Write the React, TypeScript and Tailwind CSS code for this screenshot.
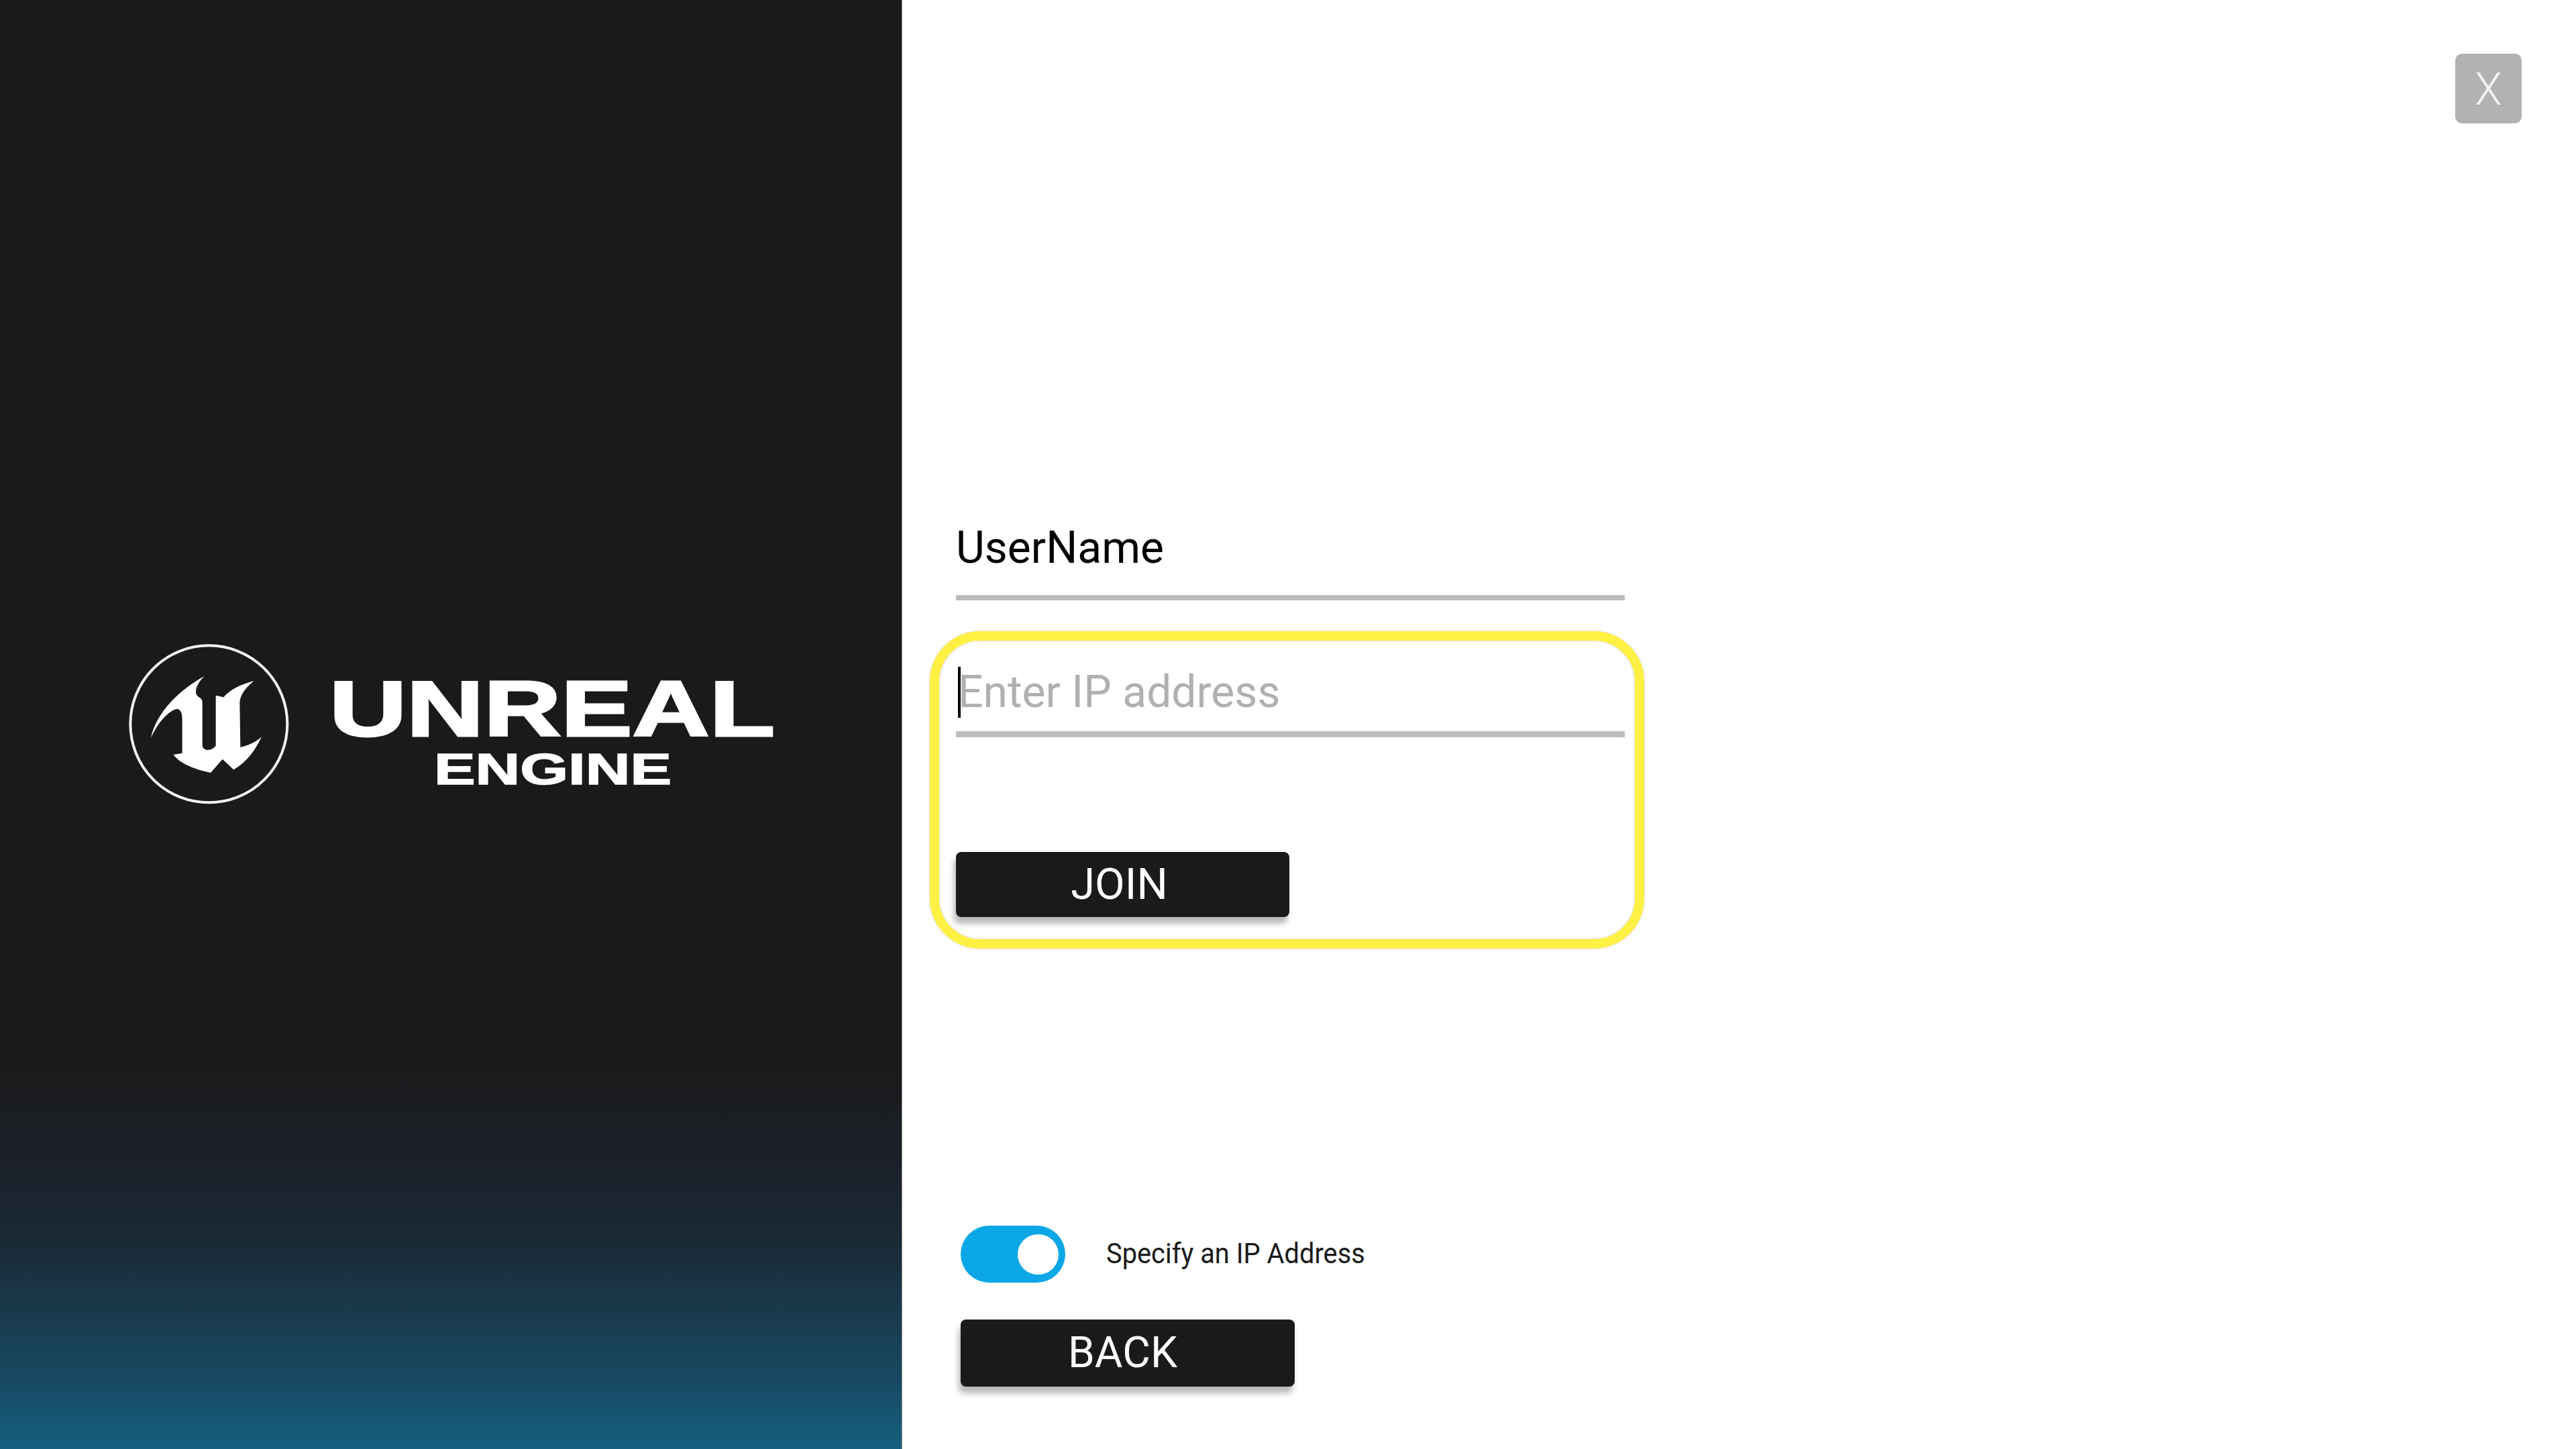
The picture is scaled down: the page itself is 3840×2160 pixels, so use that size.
import React from "react";

const roboto = "font-['Roboto',sans-serif]";

function UnrealMark() {
  return (
    <svg width="280" height="280" viewBox="0 0 840 840" className="shrink-0">
      <circle cx="424" cy="418" r="351" fill="none" stroke="#f2f2f2" strokeWidth="12" />
      <path
        fill="#ffffff"
        d="M165 480 C180 400 250 290 405 203 C375 230 360 265 368 285 C375 300 395 300 395 320 L395 515 C400 540 435 540 455 515 L455 290 L490 298 C520 262 570 240 625 225 C590 255 565 285 562 320 L565 522 C600 515 640 495 660 475 C630 540 590 590 535 622 L485 575 L432 636 C370 622 300 600 265 555 L305 548 L305 400 C305 370 300 352 280 350 C240 360 190 420 165 480 Z"
      />
    </svg>
  );
}

function UnrealWordmark() {
  return (
    <svg width="700" height="260" viewBox="0 0 700 260" className="shrink-0 ml-[30px]">
      <text
        x="11"
        y="147"
        fontFamily="Liberation Sans"
        fontWeight="700"
        fontSize="117"
        fill="#ffffff"
        stroke="#ffffff"
        strokeWidth="3"
        textLength="664"
        lengthAdjust="spacingAndGlyphs"
      >
        UNREAL
      </text>
      <text
        x="167"
        y="219"
        fontFamily="Liberation Sans"
        fontWeight="700"
        fontSize="65"
        fill="#ffffff"
        stroke="#ffffff"
        strokeWidth="1.5"
        textLength="354"
        lengthAdjust="spacingAndGlyphs"
      >
        ENGINE
      </text>
    </svg>
  );
}

function DarkButton({ label, className }: { label: string; className: string }) {
  return (
    <button
      className={`flex items-center justify-center bg-[#1a1a1a] text-white rounded-[8px] shadow-[-3px_10px_8px_rgba(0,0,0,0.28)] leading-none ${className}`}
    >
      {label}
    </button>
  );
}

export default function App() {
  return (
    <div className={`flex w-[3840px] h-[2160px] bg-white overflow-hidden ${roboto}`}>
      {/* left logo panel */}
      <div className="relative z-10 w-[1344px] h-full shrink-0 flex items-center pl-[170px] shadow-[1px_0_0_#8f8f8f] bg-[linear-gradient(to_bottom,#1a1a1a_0%,#1a1a1a_73%,#1b2029_80%,#1a2b38_86%,#193b4e_91%,#174a63_95.5%,#156080_100%)]">
        <UnrealMark />
        <UnrealWordmark />
      </div>

      {/* right form */}
      <div className="flex-1 flex flex-col">
        <div className="flex justify-end pt-[80px] pr-[81px]">
          <button className="w-[99px] h-[104px] flex items-center justify-center pt-[3px] rounded-[10px] bg-[#b2b2b2] text-[#f2f2f2] text-[66px] leading-none font-light">
            X
          </button>
        </div>

        <div className="mt-[585px] ml-[81px] w-[997px] h-[126px] border-b-[8px] border-[#bdbdbd] pt-[10px] text-[66px] leading-[76px] text-black">
          UserName
        </div>

        <div className="mt-[46px] ml-[42px] w-[1065px] h-[473px] border-[14px] border-[#fff044] rounded-[75px] pl-[25px] pt-[26px] shadow-[0_0_3px_rgba(0,0,0,0.25),inset_0_0_3px_rgba(0,0,0,0.25)]">
          <div className="relative w-[997px] h-[118px] border-b-[9px] border-[#bdbdbd] pt-[13px] pl-[3px] text-[66px] leading-[76px] text-[#b0b0b0]">
            Enter IP address
            <span className="absolute left-[3px] top-[13px] w-[4px] h-[76px] bg-black" />
          </div>
          <DarkButton label="JOIN" className="mt-[171px] w-[497px] h-[97px] pr-[10px] text-[65px]" />
        </div>

        <div className="mt-[413px] ml-[88px] flex items-center">
          <div className="w-[156px] h-[85px] rounded-full bg-[#0ca7e6] flex items-center justify-end pr-[10px]">
            <div className="w-[61px] h-[60px] rounded-full bg-white" />
          </div>
          <span className="ml-[61px] -mt-[2px] text-[42px] leading-none text-[#1a1a1a] origin-left scale-x-[0.948]">
            Specify an IP Address
          </span>
        </div>

        <DarkButton label="BACK" className="mt-[55px] ml-[88px] w-[498px] h-[100px] pr-[15px] text-[64px]" />
      </div>
    </div>
  );
}
